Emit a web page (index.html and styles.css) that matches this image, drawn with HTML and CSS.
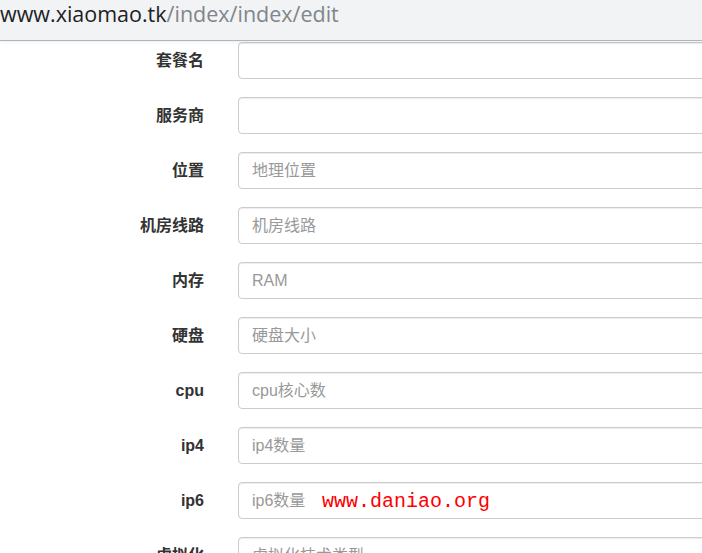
FILE: index.html
```html
<!DOCTYPE html>
<html lang="zh">
<head>
<meta charset="utf-8">
<title>edit</title>
<link rel="stylesheet" href="styles.css">
</head>
<body>
<div class="addr"><span class="host">www.xiaomao.tk</span><span class="path">/index/index/edit</span></div>
<form class="form">
  <div class="row"><label class="lbl cjk">套餐名</label><input class="ctl" type="text"></div>
  <div class="row"><label class="lbl cjk">服务商</label><input class="ctl" type="text"></div>
  <div class="row"><label class="lbl cjk">位置</label><input class="ctl" type="text" placeholder="地理位置"></div>
  <div class="row"><label class="lbl cjk">机房线路</label><input class="ctl" type="text" placeholder="机房线路"></div>
  <div class="row"><label class="lbl cjk">内存</label><input class="ctl" type="text" placeholder="RAM"></div>
  <div class="row"><label class="lbl cjk">硬盘</label><input class="ctl" type="text" placeholder="硬盘大小"></div>
  <div class="row"><label class="lbl">cpu</label><input class="ctl" type="text" placeholder="cpu核心数"></div>
  <div class="row"><label class="lbl">ip4</label><input class="ctl" type="text" placeholder="ip4数量"></div>
  <div class="row wm-row"><label class="lbl">ip6</label><input class="ctl" type="text" placeholder="ip6数量"><span class="wm">www.daniao.org</span></div>
  <div class="row"><label class="lbl cjk">虚拟化</label><input class="ctl" type="text" placeholder="虚拟化技术类型"></div>
</form>
</body>
</html>
```
FILE: styles.css
```css
html, body {
  margin: 0;
  padding: 0;
  background: #fff;
  overflow: hidden;
  width: 702px;
  height: 553px;
}
body {
  font-family: "Liberation Sans", "Noto Sans CJK SC", sans-serif;
}
.addr {
  height: 40px;
  background: #f1f3f4;
  border-bottom: 1px solid #b4b4b4;
  box-shadow: 0 1px 3px rgba(0,0,0,0.08);
  font-family: "Open Sans", "Liberation Sans", sans-serif;
  font-size: 21.5px;
  line-height: 28px;
  white-space: nowrap;
  position: relative;
  z-index: 1;
}
.host { color: #202124; }
.path { color: #80868b; }
.form {
  padding-top: 1px;
}
.row {
  display: flex;
  align-items: center;
  margin-bottom: 18px;
  position: relative;
}
.lbl {
  width: 204px;
  flex: none;
  text-align: right;
  padding-right: 34px;
  box-sizing: content-box;
  font-weight: bold;
  font-size: 16px;
  color: #333;
  font-family: "Liberation Sans", "Noto Sans CJK SC", sans-serif;
}
.lbl.cjk {
  padding-bottom: 3px;
}
.ctl {
  flex: none;
  width: 600px;
  height: 37px;
  box-sizing: border-box;
  border: 1px solid #ccc;
  border-radius: 4px;
  padding: 0 13px;
  font-size: 16px;
  font-family: "Liberation Sans", "Noto Sans CJK SC", sans-serif;
  color: #555;
  background: #fff;
  box-shadow: inset 0 1px 1px rgba(0,0,0,0.075);
  outline: none;
}
.ctl::placeholder { color: #999; }
.wm {
  position: absolute;
  left: 322px;
  top: 6px;
  font-family: "Liberation Mono", monospace;
  font-size: 20px;
  color: #ff0000;
  line-height: 28px;
}
```
